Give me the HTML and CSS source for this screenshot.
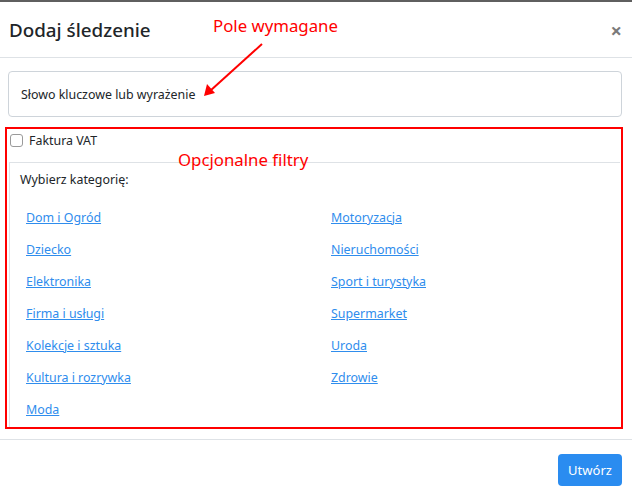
FILE: index.html
```html
<!DOCTYPE html>
<html lang="pl">
<head>
<meta charset="utf-8">
<title>Dodaj śledzenie</title>
<link rel="stylesheet" href="styles.css">
</head>
<body>
<div class="modal">
  <div class="modal-header">
    <h5 class="modal-title">Dodaj śledzenie</h5>
    <span class="close">×</span>
  </div>
  <div class="modal-body">
    <div class="input">Słowo kluczowe lub wyrażenie</div>
    <div class="filters">
      <label class="check-row"><span class="checkbox"></span>Faktura VAT</label>
      <div class="card">
        <div class="card-title">Wybierz kategorię:</div>
        <div class="cats">
          <a href="#">Dom i Ogród</a>
          <a href="#">Motoryzacja</a>
          <a href="#">Dziecko</a>
          <a href="#">Nieruchomości</a>
          <a href="#">Elektronika</a>
          <a href="#">Sport i turystyka</a>
          <a href="#">Firma i usługi</a>
          <a href="#">Supermarket</a>
          <a href="#">Kolekcje i sztuka</a>
          <a href="#">Uroda</a>
          <a href="#">Kultura i rozrywka</a>
          <a href="#">Zdrowie</a>
          <a href="#">Moda</a>
        </div>
      </div>
    </div>
  </div>
  <div class="modal-footer">
    <button class="btn">Utwórz</button>
  </div>

  <div class="note note-required">Pole wymagane</div>
  <div class="note note-optional">Opcjonalne filtry</div>
  <svg class="arrow" width="632" height="491" viewBox="0 0 632 491">
    <line x1="262" y1="44" x2="210" y2="91" stroke="#ff0000" stroke-width="2"/>
    <polygon points="204,96 207,84 215,93" fill="#ff0000"/>
  </svg>
</div>
</body>
</html>
```
FILE: styles.css
```css
* { box-sizing: border-box; }
html, body { margin: 0; padding: 0; background: #fff; }
body {
  font-family: "Noto Sans", "Open Sans", "Liberation Sans", sans-serif;
  color: #212529;
  font-size: 12.4px;
}
.modal {
  position: relative;
  width: 632px;
  height: 491px;
  border-top: 2px solid #5f5f5f;
}
.modal-header {
  height: 56px;
  padding: 0 10px 0 9px;
  display: flex;
  align-items: center;
  justify-content: space-between;
  border-bottom: 1px solid #dee2e6;
}
.modal-title {
  margin: 0;
  font-size: 18.8px;
  font-weight: 500;
  color: #212529;
}
.close {
  font-size: 20px;
  font-weight: 700;
  color: #7a7a7a;
  line-height: 1;
  margin-top: 2px;
}
.modal-body {
  padding: 13px 10px 0 8px;
}
.input {
  height: 46px;
  border: 1px solid #ced4da;
  border-radius: 4px;
  padding-left: 12px;
  display: flex;
  align-items: center;
  color: #212529;
}
.filters {
  margin: 10px -1px 0 -3px;
  border: 2px solid #ff0000;
  height: 302px;
  overflow: hidden;
}
.check-row {
  display: flex;
  align-items: center;
  height: 33px;
  padding-left: 3px;
  padding-bottom: 11px;
}
.checkbox {
  width: 13px;
  height: 13px;
  border: 1px solid #9a9a9a;
  border-radius: 3px;
  margin-right: 6px;
  background: #fff;
}
.card {
  margin: 0 1px 0 2px;
  border: 1px solid #dee2e6;
  border-right: none;
  border-bottom: none;
  height: 270px;
  padding: 8px 10px 0 10px;
}
.card-title {
  line-height: 17px;
}
.cats {
  display: grid;
  grid-template-columns: 305px 1fr;
  grid-auto-rows: 32px;
  padding: 22px 0 0 6px;
}
.cats a {
  color: #2f8ded;
  text-decoration: underline;
  line-height: 16px;
}
.modal-footer {
  position: absolute;
  left: 0;
  right: 0;
  top: 437px;
  display: flex;
  justify-content: flex-end;
  padding: 14px 10px 0 0;
  border-top: 1px solid #dee2e6;
}
.btn {
  width: 64px;
  height: 32px;
  border: none;
  border-radius: 4px;
  background: #2a8cf0;
  color: #fff;
  font-family: inherit;
  font-size: 13px;
  padding: 0;
}
.note {
  position: absolute;
  color: #ff0000;
  font-family: "Noto Sans", "Open Sans", sans-serif;
}
.note-required {
  left: 213px;
  top: 12px;
  font-size: 16.8px;
}
.note-optional {
  left: 178px;
  top: 146px;
  font-size: 16.8px;
}
.arrow {
  position: absolute;
  left: 0;
  top: -2px;
  pointer-events: none;
}
```
